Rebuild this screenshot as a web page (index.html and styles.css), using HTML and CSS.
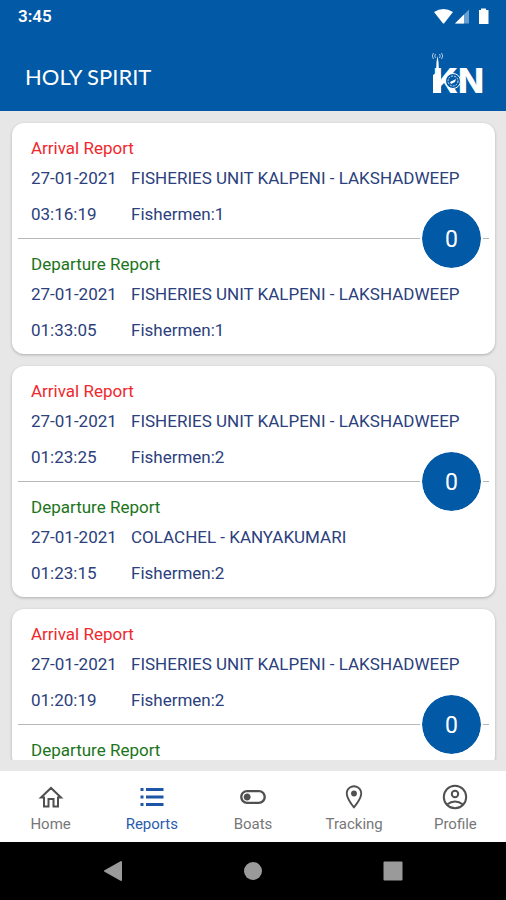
FILE: index.html
```html
<!DOCTYPE html>
<html lang="en">
<head>
<meta charset="utf-8">
<meta name="viewport" content="width=device-width, initial-scale=1">
<title>Holy Spirit - Reports</title>
<link rel="stylesheet" href="styles.css">
</head>
<body>
<div class="app">
  <header class="header">
    <div class="status">
      <span>3:45</span>
      <svg class="status-icons" width="58" height="20" viewBox="0 0 58 20" aria-hidden="true">
        <path d="M0 4Q9.500 -2 19 4L10 15.500H9Z" fill="#fff"/>
        <path d="M21 15.500L35 1.500V15.500Z" fill="#6a9fd2"/>
        <path d="M21 15.500L30 6.500V15.500Z" fill="#fff"/>
        <path d="M47 2V0.500H52V2H54.500V16H45V2Z" fill="#fff"/>
      </svg>
    </div>
    <div class="titlebar">
      <h1 class="title">HOLY SPIRIT</h1>
      <svg class="logo" width="58" height="52" viewBox="0 0 58 52" role="img" aria-label="KN">
        <text class="logo-text" x="5" y="42">KN</text>
        <path d="M5 42V24L8 22L8.500 11L9.500 5L10.500 11L11 22L13 24V42Z" fill="#fff"/>
        <g fill="none" stroke="#a9c9e6" stroke-width="1">
          <path d="M7.500 7Q6 5 7.500 3M11.500 7Q13 5 11.500 3M5.500 8Q3 5 5.500 2M13.500 8Q16 5 13.500 2"/>
        </g>
        <circle cx="25" cy="30" r="7.500" fill="#0259a5" stroke="#fff"/>
        <circle cx="25" cy="30" r="5" fill="none" stroke="#cfe0f0" stroke-dasharray="2 1"/>
        <path d="M22 31L28 28L27 31L23 33Z" fill="#fff"/>
      </svg>
    </div>
  </header>

  <main class="list">
    <article class="card">
      <section class="report">
        <h2 class="kind arrival">Arrival Report</h2>
        <div class="row"><span>27-01-2021</span><span>FISHERIES UNIT KALPENI - LAKSHADWEEP</span></div>
        <div class="row"><span>03:16:19</span><span>Fishermen:1</span></div>
      </section>
      <div class="divider"><span class="badge">0</span></div>
      <section class="report">
        <h2 class="kind departure">Departure Report</h2>
        <div class="row"><span>27-01-2021</span><span>FISHERIES UNIT KALPENI - LAKSHADWEEP</span></div>
        <div class="row"><span>01:33:05</span><span>Fishermen:1</span></div>
      </section>
    </article>
    <article class="card">
      <section class="report">
        <h2 class="kind arrival">Arrival Report</h2>
        <div class="row"><span>27-01-2021</span><span>FISHERIES UNIT KALPENI - LAKSHADWEEP</span></div>
        <div class="row"><span>01:23:25</span><span>Fishermen:2</span></div>
      </section>
      <div class="divider"><span class="badge">0</span></div>
      <section class="report">
        <h2 class="kind departure">Departure Report</h2>
        <div class="row"><span>27-01-2021</span><span>COLACHEL - KANYAKUMARI</span></div>
        <div class="row"><span>01:23:15</span><span>Fishermen:2</span></div>
      </section>
    </article>
    <article class="card">
      <section class="report">
        <h2 class="kind arrival">Arrival Report</h2>
        <div class="row"><span>27-01-2021</span><span>FISHERIES UNIT KALPENI - LAKSHADWEEP</span></div>
        <div class="row"><span>01:20:19</span><span>Fishermen:2</span></div>
      </section>
      <div class="divider"><span class="badge">0</span></div>
      <section class="report">
        <h2 class="kind departure">Departure Report</h2>
      </section>
    </article>
  </main>

  <nav class="tabs">
    <a class="tab" href="#home">
      <svg class="outline" width="28" height="28" viewBox="0 0 28 28"><path d="M4 14.500L14 5L24 14.500H21V23.500H16.500V16H11.500V23.500H7V14.500Z"/></svg>
      <span>Home</span>
    </a>
    <a class="tab active" href="#reports" aria-current="page">
      <svg width="28" height="28" viewBox="0 0 28 28"><path d="M2.500 5h3v3h-3zM8 5h17.500v3H8zM2.500 12.500h3v3h-3zM8 12.500h17.500v3H8zM2.500 20h3v3h-3zM8 20h17.500v3H8z"/></svg>
      <span>Reports</span>
    </a>
    <a class="tab" href="#boats">
      <svg width="28" height="28" viewBox="0 0 24 24"><path d="M17 6H7c-3.310 0-6 2.690-6 6s2.690 6 6 6h10c3.310 0 6-2.690 6-6s-2.690-6-6-6zm0 10H7c-2.210 0-4-1.790-4-4s1.790-4 4-4h10c2.210 0 4 1.790 4 4s-1.790 4-4 4zM7 9c-1.660 0-3 1.340-3 3s1.340 3 3 3 3-1.340 3-3-1.340-3-3-3z"/></svg>
      <span>Boats</span>
    </a>
    <a class="tab" href="#tracking">
      <svg width="28" height="28" viewBox="0 0 24 24"><path d="M12 2C8.130 2 5 5.130 5 9c0 5.250 7 13 7 13s7-7.750 7-13c0-3.870-3.130-7-7-7zM6.600 9c0-3 2.400-5.400 5.400-5.400s5.400 2.400 5.400 5.400c0 2.880-2.880 7.590-5.400 10.480C9.520 16.610 6.600 11.850 6.600 9z"/><circle cx="12" cy="9" r="2.500"/></svg>
      <span>Tracking</span>
    </a>
    <a class="tab" href="#profile">
      <svg class="outline" width="28" height="28" viewBox="0 0 28 28"><circle cx="14" cy="14" r="11.200"/><circle cx="14" cy="11" r="3.200"/><path d="M6 21.500Q14 15.500 22 21.500"/></svg>
      <span>Profile</span>
    </a>
  </nav>

  <div class="system">
    <button class="key" type="button" aria-label="Back"><svg width="22" height="22" viewBox="0 0 22 22"><path d="M19 2V20L3 11Z" stroke-width="2" stroke-linejoin="round"/></svg></button>
    <button class="key" type="button" aria-label="Home"><svg width="22" height="22" viewBox="0 0 22 22"><circle cx="11" cy="11" r="9"/></svg></button>
    <button class="key" type="button" aria-label="Recent apps"><svg width="22" height="22" viewBox="0 0 22 22"><rect x="1.500" y="1.500" width="19" height="19" rx="1"/></svg></button>
  </div>
</div>
</body>
</html>
```
FILE: styles.css
```css
* {
  box-sizing: border-box;
}

body {
  margin: 0;
  font-family: Roboto, "Liberation Sans", sans-serif;
}

.app {
  display: flex;
  flex-direction: column;
  height: 100vh;
  background: #e7e7e7;
}

.header {
  background: #0259a5;
  color: #fff;
  padding-bottom: 8px;
}

.status {
  display: flex;
  justify-content: space-between;
  align-items: center;
  height: 32px;
  padding: 0 14px 0 18px;
  font-size: 17px;
  font-weight: 600;
}

.status-icons {
  margin-top: 4px;
}

.titlebar {
  display: flex;
  justify-content: space-between;
  align-items: center;
  padding: 19px 20px 0 25px;
}

.title {
  margin: 0;
  font-family: Lato, sans-serif;
  font-size: 22px;
  line-height: 28px;
  font-weight: 400;
}

.logo-text {
  font-family: Inter, sans-serif;
  font-size: 34px;
  font-weight: 800;
  fill: #fff;
}

.list {
  flex: 1;
  min-height: 0;
  overflow: hidden;
  display: flex;
  flex-direction: column;
  gap: 12px;
  padding: 12px 11px 0 12px;
  margin-bottom: 11px;
}

.card {
  flex: none;
  padding: 0 6px;
  border-radius: 12px;
  background: #fff;
  box-shadow: 0 1px 3px rgba(0, 0, 0, 0.25);
}

.report {
  display: flex;
  flex-direction: column;
  gap: 12px;
  padding: 13px 13px 12px;
  font-size: 17px;
  line-height: 24px;
  color: #2b407c;
}

.kind {
  margin: 0 0 -6px;
  font-size: 17px;
  font-weight: 400;
}

.arrival {
  color: #f0282d;
}

.departure {
  color: #1c7420;
}

.row {
  display: grid;
  grid-template-columns: 100px 1fr;
  white-space: nowrap;
}

.divider {
  position: relative;
  height: 1px;
  background: #b4b8b6;
}

.badge {
  position: absolute;
  top: -31px;
  right: 6px;
  width: 63px;
  height: 63px;
  border: 2px solid #fff;
  border-radius: 50%;
  background: #0259a5;
  background-clip: padding-box;
  color: #fff;
  font-size: 23px;
  line-height: 61px;
  text-align: center;
}

.tabs {
  display: grid;
  grid-template-columns: repeat(5, 1fr);
  height: 71px;
  background: #fff;
}

.tab {
  display: flex;
  flex-direction: column;
  align-items: center;
  padding-top: 12px;
  gap: 4px;
  color: #777;
  font-size: 15px;
  line-height: 18px;
  text-decoration: none;
}

.tab svg {
  fill: #505050;
}

.tab .outline {
  fill: none;
  stroke: #505050;
  stroke-width: 2;
}

.tab.active,
.tab.active svg {
  color: #2a5cae;
  fill: #1f55a8;
}

.system {
  display: flex;
  justify-content: center;
  align-items: center;
  gap: 118px;
  height: 58px;
  background: #000;
}

.key {
  display: flex;
  padding: 0;
  border: 0;
  background: none;
}

.key svg {
  fill: #9a9a9a;
  stroke: #9a9a9a;
  stroke-width: 0;
}
```
